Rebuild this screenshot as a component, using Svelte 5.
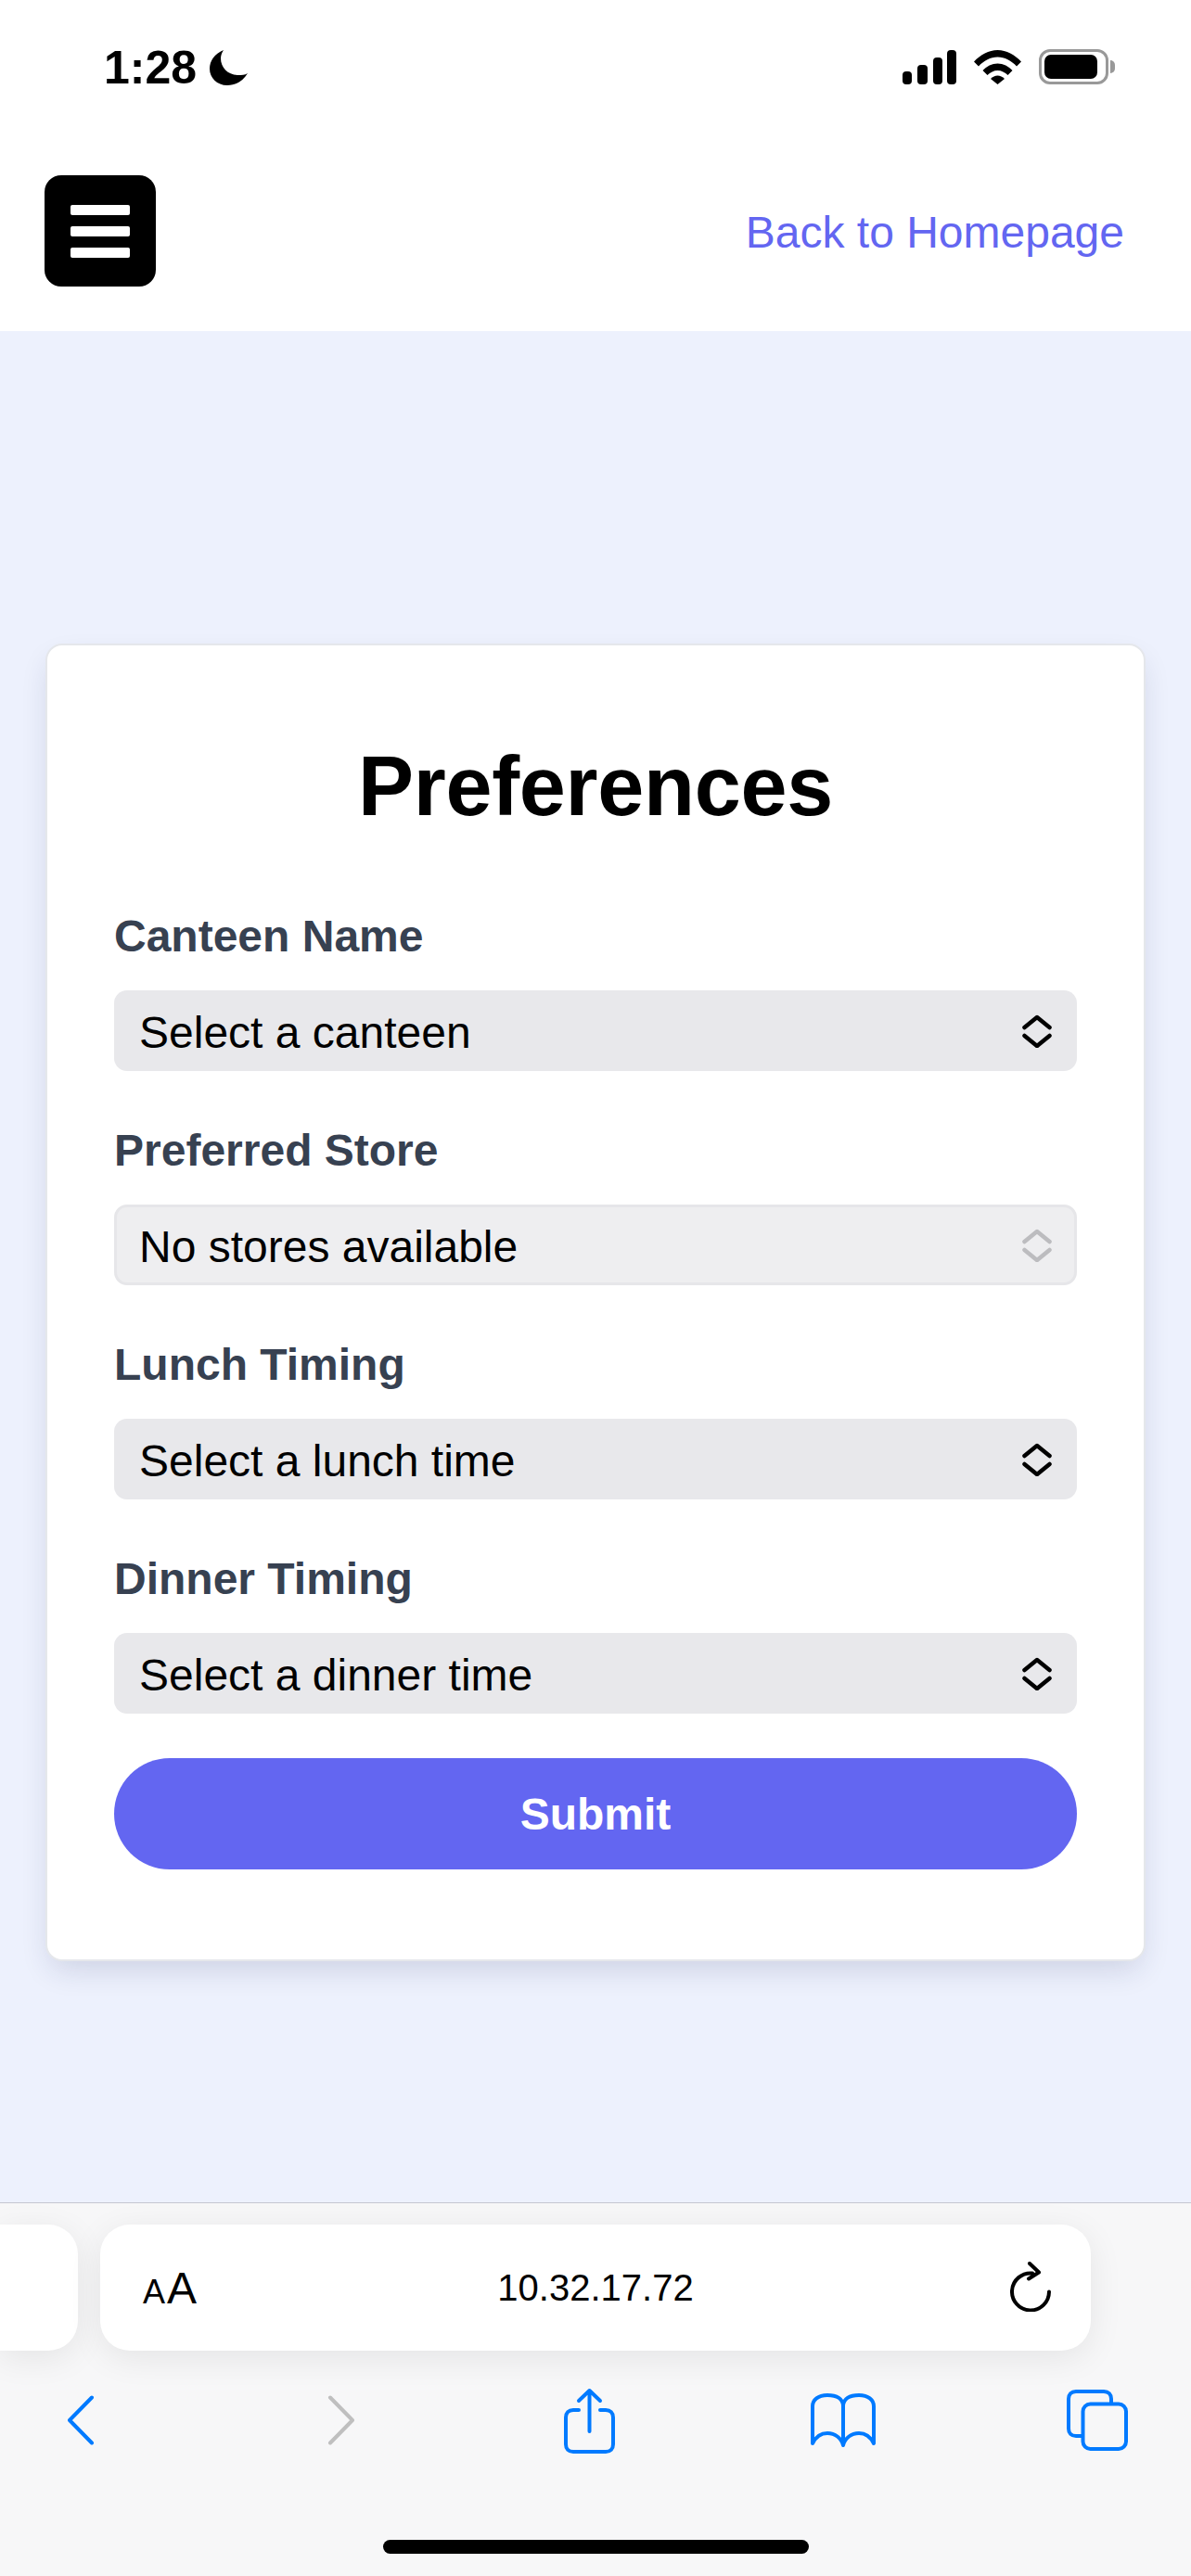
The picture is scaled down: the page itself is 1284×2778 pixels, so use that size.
<script>
  const fields = [
    { label: 'Canteen Name', value: 'Select a canteen', disabled: false },
    { label: 'Preferred Store', value: 'No stores available', disabled: true },
    { label: 'Lunch Timing', value: 'Select a lunch time', disabled: false },
    { label: 'Dinner Timing', value: 'Select a dinner time', disabled: false }
  ];
</script>

<div class="screen">
  <header class="top">
    <div class="status">
      <div class="clock">
        <span class="time">1:28</span>
        <svg class="moon" width="41" height="38" viewBox="0 0 41 38" aria-hidden="true">
          <path d="M15 0C5 4 0 12 0 20c0 10 8 18 19 18 10 0 17-5 22-13-3 2-7 2-10 2C20 27 12 19 12 9c0-3 1-6 3-9z" />
        </svg>
      </div>
      <div class="indicators">
        <svg width="58" height="37" viewBox="0 0 58 37" aria-hidden="true">
          <rect x="0" y="23" width="10" height="14" rx="4" />
          <rect x="16" y="16" width="11" height="21" rx="4" />
          <rect x="33" y="8" width="10" height="29" rx="4" />
          <rect x="48" y="0" width="10" height="37" rx="4" />
        </svg>
        <svg class="wifi" width="51" height="37" viewBox="0 0 51 37" aria-hidden="true">
          <path d="M0 12.500C7 5 16 0 25.500 0S44 5 51 12.500l-5 5C40.500 11.500 33 7.500 25.500 7.500S10.500 11.500 5 17.500z" />
          <path d="M9.500 22C13.500 17.500 19.500 14.500 25.500 14.500S37.500 17.500 41.500 22l-5 5c-3-3-7-5-11-5s-8 2-11 5z" />
          <path d="M18 31c2-2 5-3.500 7.500-3.500S31 29 33 31l-7.500 6z" />
        </svg>
        <div class="battery"><span class="level"></span></div>
        <span class="cap"></span>
      </div>
    </div>
    <nav class="nav">
      <button class="menu" aria-label="Menu">
        <span></span><span></span><span></span>
      </button>
      <a class="back" href="#home">Back to Homepage</a>
    </nav>
  </header>

  <main class="main">
    <section class="card">
      <h1>Preferences</h1>
      <form class="form">
        {#each fields as field}
          <div class="field">
            <label for={field.label}>{field.label}</label>
            <div class="select" class:off={field.disabled}>
              <select id={field.label} disabled={field.disabled}>
                <option>{field.value}</option>
              </select>
              <svg class="updown" width="32" height="36" viewBox="0 0 32 36" aria-hidden="true">
                <path d="M2.500 14L16 3l13.500 11M2.500 23L16 34l13.500-11" />
              </svg>
            </div>
          </div>
        {/each}
        <button class="submit" type="button">Submit</button>
      </form>
    </section>
  </main>

  <footer class="browser">
    <div class="address">
      <div class="tab-edge"></div>
      <div class="pill">
        <span class="aa"><small>A</small>A</span>
        <span class="url">10.32.17.72</span>
        <svg class="line reload" width="44" height="54" viewBox="0 0 44 54" aria-hidden="true">
          <path d="M24 12.500A20 20 0 1 0 42 32.500M21 2l10 9.500-11 7" />
        </svg>
      </div>
    </div>
    <div class="tools">
      <svg class="line" width="30" height="54" viewBox="0 0 30 54" aria-hidden="true">
        <path d="M27 2.500L3 27l24 24.500" />
      </svg>
      <svg class="line grey" width="31" height="54" viewBox="0 0 31 54" aria-hidden="true">
        <path d="M4 2.500L28 27 4 51.500" />
      </svg>
      <svg class="line" width="55" height="71" viewBox="0 0 55 71" aria-hidden="true">
        <path d="M16 24H10c-5 0-8 3-8 8v29c0 5 3 8 8 8h35c5 0 8-3 8-8V32c0-5-3-8-8-8h-6M27.500 3v44M16 14L27.500 3 39 14" />
      </svg>
      <svg class="line" width="70" height="58" viewBox="0 0 70 58" aria-hidden="true">
        <path d="M35 14C35 6 28 2 18 2 8 2 2 7 2 14v40c4-8 10-11 16-11 8 0 15 5 17 13 2-8 9-13 17-13 6 0 12 3 16 11V14C68 7 62 2 52 2 42 2 35 6 35 14v42" />
      </svg>
      <svg class="line" width="66" height="66" viewBox="0 0 66 66" aria-hidden="true">
        <path d="M48 14v-4c0-5-3-8-8-8H10c-5 0-8 3-8 8v32c0 5 3 8 8 8h6" />
        <rect x="17.500" y="15.500" width="46.500" height="48.500" rx="8" />
      </svg>
    </div>
    <div class="home"></div>
  </footer>
</div>

<style>
  :global(body) {
    margin: 0;
  }
  .screen {
    width: 1284px;
    height: 2778px;
    display: flex;
    flex-direction: column;
    overflow: hidden;
    background: #edf1fd;
    font-family: 'Liberation Sans', Arial, sans-serif;
    color: #000;
  }

  .top {
    height: 357px;
    background: #fff;
    box-sizing: border-box;
  }
  .status {
    height: 189px;
    box-sizing: border-box;
    padding: 54px 82px 0 112px;
    display: flex;
    justify-content: space-between;
    align-items: flex-start;
  }
  .clock {
    display: flex;
    align-items: flex-start;
    gap: 14px;
  }
  .time {
    font-size: 50px;
    font-weight: 700;
    line-height: 38px;
  }
  .indicators {
    display: flex;
    align-items: flex-start;
  }
  .wifi {
    margin-left: 19px;
  }
  .battery {
    width: 75px;
    height: 38px;
    margin: -1px 0 0 19px;
    padding: 3px;
    box-sizing: border-box;
    border: 3px solid #999;
    border-radius: 12px;
  }
  .level {
    display: block;
    width: 57px;
    height: 26px;
    background: #000;
    border-radius: 7px;
  }
  .cap {
    width: 5px;
    height: 14px;
    margin: 11px 0 0 2px;
    background: #999;
    border-radius: 0 5px 5px 0;
  }

  .nav {
    display: flex;
    justify-content: space-between;
    align-items: flex-start;
    padding: 0 72px 0 48px;
  }
  .menu {
    width: 120px;
    height: 120px;
    padding: 0;
    border: 0;
    border-radius: 18px;
    background: #000;
    display: flex;
    flex-direction: column;
    align-items: center;
    justify-content: center;
    gap: 12px;
  }
  .menu span {
    width: 64px;
    height: 11px;
    background: #fff;
    border-radius: 2px;
  }
  .back {
    margin-top: 34px;
    font-size: 48px;
    line-height: 56px;
    color: #6366f1;
    text-decoration: none;
  }

  .main {
    flex: 1;
    padding: 337px 49px 0;
  }
  .card {
    box-sizing: border-box;
    height: 1421px;
    padding: 98px 72px 0;
    background: #fff;
    border: 2px solid #e5e7eb;
    border-radius: 18px;
    box-shadow: 0 14px 32px -6px rgba(30, 40, 90, 0.16);
  }
  h1 {
    margin: 0 0 70px;
    font-size: 90px;
    line-height: 108px;
    font-weight: 700;
    letter-spacing: -0.3px;
    text-align: center;
  }
  .form {
    display: flex;
    flex-direction: column;
    gap: 48px;
  }
  label {
    display: block;
    margin-bottom: 20px;
    font-size: 48px;
    line-height: 76px;
    font-weight: 700;
    color: #374151;
  }
  .select {
    position: relative;
    height: 87px;
  }
  select {
    display: block;
    width: 100%;
    height: 100%;
    padding: 4px 0 0 27px;
    box-sizing: border-box;
    appearance: none;
    border: 0;
    border-radius: 14px;
    background: #e8e8eb;
    color: #000;
    font-family: inherit;
    font-size: 48px;
    opacity: 1;
  }
  .off select {
    border: 3px solid #e6e6e9;
    padding-left: 24px;
    background: #eeeef0;
  }
  .updown {
    position: absolute;
    right: 27px;
    top: 26px;
    fill: none;
    stroke: #000;
    stroke-width: 4.500;
    stroke-linecap: round;
    stroke-linejoin: round;
  }
  .off .updown {
    stroke: #bcbcbf;
  }
  .submit {
    height: 120px;
    border: 0;
    border-radius: 60px;
    background: #6366f1;
    color: #fff;
    font-family: inherit;
    font-size: 48px;
    font-weight: 700;
  }

  .browser {
    height: 403px;
    box-sizing: border-box;
    border-top: 1px solid #c5c6d0;
    background: #f7f7f8;
    padding-top: 23px;
  }
  .address {
    display: flex;
    gap: 24px;
    height: 136px;
  }
  .tab-edge {
    width: 84px;
    background: #fff;
    border-radius: 0 32px 32px 0;
    box-shadow: 0 8px 36px rgba(0, 0, 0, 0.08);
  }
  .pill {
    width: 1068px;
    box-sizing: border-box;
    padding: 0 43px 0 46px;
    display: grid;
    grid-template-columns: 1fr auto 1fr;
    align-items: center;
    background: #fff;
    border-radius: 32px;
    box-shadow: 0 8px 36px rgba(0, 0, 0, 0.08);
  }
  .aa {
    font-size: 48px;
    white-space: nowrap;
  }
  .aa small {
    font-size: 36px;
    margin-right: 2px;
  }
  .url {
    font-size: 40px;
    margin-left: -3px;
  }
  .line {
    fill: none;
    stroke: #007aff;
    stroke-width: 4;
    stroke-linecap: round;
    stroke-linejoin: round;
  }
  .reload {
    stroke: #000;
    justify-self: end;
    margin: -2px 0 0 0;
  }
  .line.grey {
    stroke: #bfbfbf;
    margin-left: 12px;
  }
  .tools {
    display: grid;
    grid-template-columns: repeat(5, 274px);
    justify-items: center;
    align-items: center;
    height: 80px;
    margin: 35px 0 0 -50px;
  }
  .home {
    width: 459px;
    height: 15px;
    margin: 89px auto 0;
    background: #000;
    border-radius: 8px;
  }
</style>
